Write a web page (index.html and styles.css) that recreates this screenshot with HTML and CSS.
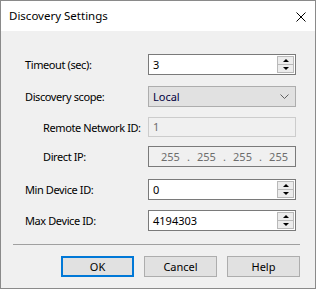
FILE: index.html
```html
<!DOCTYPE html>
<html lang="en">
<head>
    <meta charset="UTF-8">
    <title>Discovery Settings</title>
    <link rel="stylesheet" href="styles.css">
</head>
<body>
    <div class="dialog">
        <div class="titlebar">
            <span class="title">Discovery Settings</span>
            <svg class="close" width="10" height="10" viewBox="0 0 10 10">
                <path d="M0.5 0.5 L9.5 9.5 M9.5 0.5 L0.5 9.5" stroke="#000" stroke-width="1"/>
            </svg>
        </div>

        <div class="content">
            <div class="row row-timeout">
                <label>Timeout (sec):</label>
                <div class="edit">
                    <span class="value">3</span>
                    <div class="spin">
                        <div class="spin-btn"><span class="tri up"></span></div>
                        <div class="spin-btn"><span class="tri down"></span></div>
                    </div>
                </div>
            </div>

            <div class="row row-scope">
                <label>Discovery scope:</label>
                <div class="combo">
                    <span class="value">Local</span>
                    <svg width="9" height="5" viewBox="0 0 9 5">
                        <path d="M0.5 0.5 L4.5 4.5 L8.5 0.5" fill="none" stroke="#606060" stroke-width="1"/>
                    </svg>
                </div>
            </div>

            <div class="row row-remote">
                <label class="sub">Remote Network ID:</label>
                <div class="edit disabled">
                    <span class="value">1</span>
                </div>
            </div>

            <div class="row row-ip">
                <label class="sub">Direct IP:</label>
                <div class="ipbox">
                    <span>255</span><span>.</span><span>255</span><span>.</span><span>255</span><span>.</span><span>255</span>
                </div>
            </div>

            <div class="row row-min">
                <label>Min Device ID:</label>
                <div class="edit">
                    <span class="value">0</span>
                    <div class="spin">
                        <div class="spin-btn"><span class="tri up"></span></div>
                        <div class="spin-btn"><span class="tri down"></span></div>
                    </div>
                </div>
            </div>

            <div class="row row-max">
                <label>Max Device ID:</label>
                <div class="edit">
                    <span class="value">4194303</span>
                    <div class="spin">
                        <div class="spin-btn"><span class="tri up"></span></div>
                        <div class="spin-btn"><span class="tri down"></span></div>
                    </div>
                </div>
            </div>

            <div class="separator"></div>

            <div class="buttons">
                <button class="btn default">OK</button>
                <button class="btn">Cancel</button>
                <button class="btn">Help</button>
            </div>
        </div>
    </div>
</body>
</html>
```

FILE: styles.css
```css
body {
    margin: 0;
    background: #ffffff;
    font-family: "Noto Sans", "Open Sans", sans-serif;
    font-size: 11px;
    color: #000;
}
.dialog {
    width: 316px;
    height: 289px;
    box-sizing: border-box;
    border: 1px solid #8a8a8a;
    background: #f0f0f0;
    display: flex;
    flex-direction: column;
}
.titlebar {
    height: 30px;
    background: #ffffff;
    display: flex;
    align-items: center;
    justify-content: space-between;
    padding: 0 9px 0 8px;
}
.title {
    font-size: 11.5px;
    margin-top: -1px;
}
.close {
    margin-top: 1px;
}
.content {
    padding: 23px 19px 0 24px;
}
.row {
    display: flex;
    align-items: center;
    height: 21px;
}
.row label {
    width: 123px;
    white-space: nowrap;
    letter-spacing: -0.4px;
}
.row label.sub {
    padding-left: 18px;
    width: 105px;
}
.row-scope { margin-top: 11px; }
.row-remote { margin-top: 10px; height: 20px; }
.row-ip { margin-top: 9px; }
.row-min { margin-top: 12px; }
.row-max { margin-top: 10px; }

.edit {
    flex: 1;
    height: 100%;
    box-sizing: border-box;
    border: 1px solid #7a7a7a;
    background: #fff;
    display: flex;
    align-items: stretch;
}
.edit .value {
    flex: 1;
    padding-left: 4px;
    line-height: 19px;
}
.edit.disabled {
    border-color: #cccccc;
    background: #f0f0f0;
    color: #6d6d6d;
}
.edit.disabled .value {
    line-height: 18px;
}
.spin {
    width: 17px;
    display: flex;
    flex-direction: column;
    padding: 1px 1px 1px 0;
}
.spin-btn {
    flex: 1;
    background: #ececec;
    border: 1px solid #b9b9b9;
    display: flex;
    align-items: center;
    justify-content: center;
}
.spin-btn + .spin-btn {
    border-top: none;
}
.tri {
    width: 0;
    height: 0;
    border-left: 3px solid transparent;
    border-right: 3px solid transparent;
}
.tri.up {
    border-bottom: 3px solid #000;
}
.tri.down {
    border-top: 3px solid #000;
}

.combo {
    flex: 1;
    height: 100%;
    box-sizing: border-box;
    border: 1px solid #adadad;
    background: #e1e1e1;
    display: flex;
    align-items: center;
    justify-content: space-between;
    padding: 0 6px 0 4px;
}
.combo .value {
    color: #000040;
}

.ipbox {
    flex: 1;
    height: 100%;
    box-sizing: border-box;
    border: 1px solid #7a7a7a;
    background: #f0f0f0;
    color: #6d6d6d;
    display: flex;
    align-items: center;
    justify-content: space-between;
    padding: 0 7px 0 12px;
}

.separator {
    margin: 13px -4px 0 -12px;
    border-top: 1px solid #a0a0a0;
}
.buttons {
    display: flex;
    justify-content: flex-end;
    gap: 10px;
    margin-top: 11px;
    margin-right: -4px;
}
.btn {
    width: 73px;
    height: 21px;
    box-sizing: border-box;
    border: 1px solid #adadad;
    background: #e1e1e1;
    font-family: inherit;
    font-size: 11px;
    color: #000;
    padding: 0;
}
.btn.default {
    border: 2px solid #0078d7;
}
```
